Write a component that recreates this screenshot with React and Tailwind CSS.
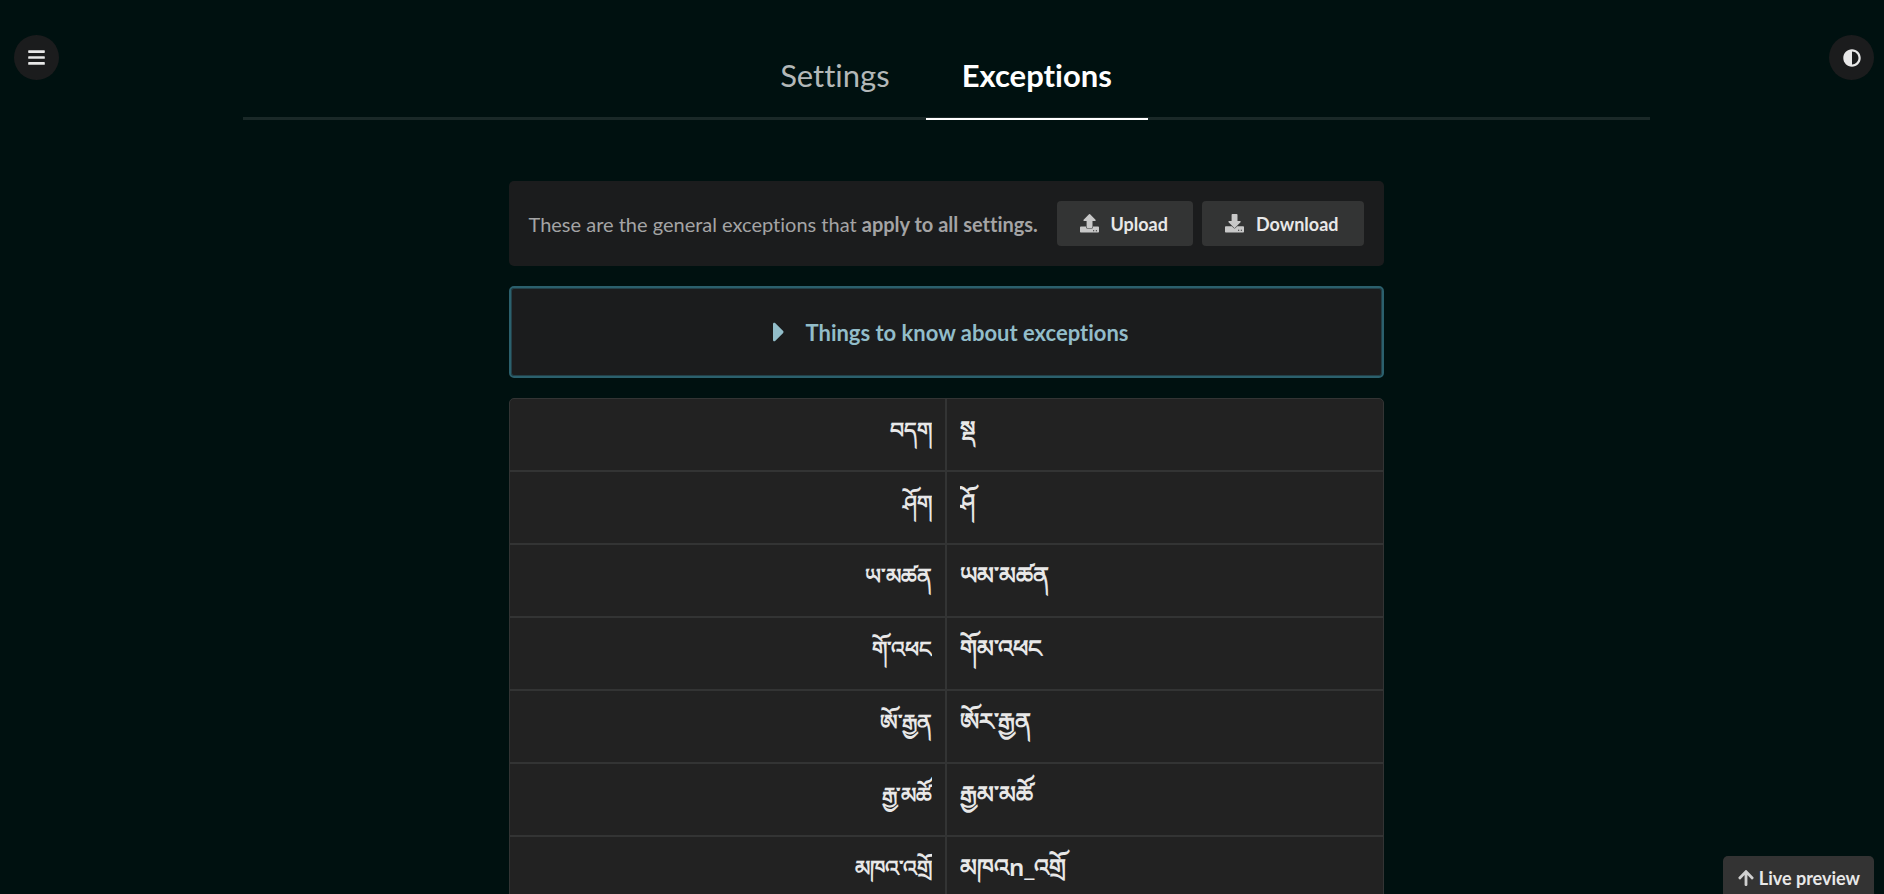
import { FaAdjust, FaArrowUp, FaBars, FaCaretRight } from "react-icons/fa";

const exceptions = [
  ["བདག", "སྡ"],
  ["ཤོག", "ཤོ"],
  ["ཡ་མཚན", "ཡམ་མཚན"],
  ["གོ་འཕང", "གོམ་འཕང"],
  ["ཨོ་རྒྱན", "ཨོར་རྒྱན"],
  ["རྒྱ་མཚོ", "རྒྱམ་མཚོ"],
  ["མཁའ་འགྲོ", "མཁའn_འགྲོ"],
];

function UploadIcon(props) {
  return (
    <svg viewBox="0 0 19 19" fill="currentColor" {...props}>
      <path d="M9 .3a.8.8 0 0 1 1.1 0l5.4 5.4c.5.5.2 1.2-.5 1.2h-2.5v6.3c0 .5-.4.8-.8.8H7.4a.8.8 0 0 1-.8-.8V6.9H4.1c-.7 0-1-.7-.5-1.2z" />
      <path
        fillRule="evenodd"
        d="M.8 12.6h5.3v.6c0 .8.6 1.3 1.3 1.3h4.3c.7 0 1.3-.5 1.3-1.3v-.6h5.2c.5 0 .8.4.8.8v4.4c0 .5-.3.8-.8.8H.8a.8.8 0 0 1-.8-.8v-4.4c0-.4.4-.8.8-.8zM13 16.3h1.2v1H13zM15.8 16.3H17v1h-1.2z"
      />
    </svg>
  );
}

function DownloadIcon(props) {
  return (
    <svg viewBox="0 0 19 19" fill="currentColor" {...props}>
      <path d="M7.4 0h4.3c.4 0 .8.4.8.8V7H15c.7 0 1 .8.5 1.3l-5.4 5.4a.8.8 0 0 1-1.1 0L3.6 8.3C3.1 7.8 3.4 7 4.1 7h2.5V.8c0-.4.3-.8.8-.8z" />
      <path
        fillRule="evenodd"
        d="M.8 12.3h6.1l1.7 1.8c.6.5 1.3.5 1.9 0l1.7-1.8h6c.5 0 .8.4.8.8v4.7c0 .5-.3.8-.8.8H.8a.8.8 0 0 1-.8-.8v-4.7c0-.4.4-.8.8-.8zM13 15.7h1.2v1.1H13zM15.8 15.7H17v1.1h-1.2z"
      />
    </svg>
  );
}

function ActionButton({ icon: Icon, children }) {
  return (
    <button
      type="button"
      className="flex h-[45px] items-center gap-3 rounded-[4px] bg-[#333434] pr-[25px] pl-[23px] text-lg font-bold text-[#e8e8e8]"
    >
      <Icon aria-hidden="true" className="size-[19px] text-[#c8c8c8]" />
      {children}
    </button>
  );
}

function ExceptionRow({ source, replacement }) {
  return (
    <tr className="h-[73px] border-b-2 border-[#333434] first:h-[72px]">
      <td className="w-1/2 border-r-2 border-[#333434] p-0">
        <input
          aria-label={`Exception ${source}`}
          defaultValue={source}
          className="block h-[71px] w-full bg-transparent px-[13px] pt-1 text-right font-['Noto_Sans',sans-serif] text-[22px] font-semibold text-[#e8e8e8] outline-none"
        />
      </td>
      <td className="w-1/2 p-0">
        <input
          aria-label={`Replacement for ${source}`}
          defaultValue={replacement}
          className="block h-[71px] w-full bg-transparent px-[13px] pt-1 font-['Noto_Sans',sans-serif] text-[24px] font-semibold text-[#e8e8e8] outline-none"
        />
      </td>
    </tr>
  );
}

export default function App() {
  return (
    <div className="min-h-screen bg-[#001110] pl-2 font-['Lato','Noto_Sans',sans-serif] [font-variant-ligatures:no-common-ligatures]">
      <button
        type="button"
        aria-label="Open menu"
        className="fixed top-[35px] left-[14px] flex size-[45px] items-center justify-center rounded-full bg-[#1b1c1d] text-[#e8e8e8]"
      >
        <FaBars aria-hidden="true" className="size-[19px]" />
      </button>
      <button
        type="button"
        aria-label="Toggle theme"
        className="fixed top-[35px] right-[10px] flex size-[45px] items-center justify-center rounded-full bg-[#1b1c1d] text-[#e8e8e8]"
      >
        <FaAdjust aria-hidden="true" className="size-[18px]" />
      </button>

      <nav className="mx-auto flex w-3/4 justify-center border-b-[3px] border-[#1a2928] pt-8 text-[31px] leading-[40px]">
        <a href="#settings" className="px-9 pt-[23px] pb-[22px] text-[#b3b8b8]">
          Settings
        </a>
        <a
          href="#exceptions"
          aria-current="page"
          className="-mb-[3px] border-b-2 border-white px-9 pt-[23px] pb-[23px] font-bold text-white"
        >
          Exceptions
        </a>
      </nav>

      <main className="mx-auto flex w-[875px] max-w-full flex-col gap-5 pt-[61px]">
        <section className="flex items-center justify-between rounded-[5px] bg-[#1b1c1d] p-5">
          <p className="text-xl text-[#a4a4a5]">
            These are the general exceptions that <b>apply to all settings.</b>
          </p>
          <div className="flex gap-[9px]">
            <ActionButton icon={UploadIcon}>Upload</ActionButton>
            <ActionButton icon={DownloadIcon}>Download</ActionButton>
          </div>
        </section>

        <button
          type="button"
          aria-expanded="false"
          className="flex h-[92px] items-center justify-center gap-[10px] rounded-[5px] border-2 border-[#2b606d] bg-[#1b1c1d] text-[22px] font-bold text-[#92bdc9] inset-ring inset-ring-[#234048]"
        >
          <FaCaretRight aria-hidden="true" className="size-8" />
          Things to know about exceptions
        </button>

        <div className="overflow-hidden rounded-[5px] border border-[#333434] bg-[#222222]">
          <table className="w-full table-fixed border-collapse">
            <tbody>
              {exceptions.map(([source, replacement]) => (
                <ExceptionRow key={source} source={source} replacement={replacement} />
              ))}
            </tbody>
          </table>
        </div>
      </main>

      <button
        type="button"
        className="fixed right-[10px] -bottom-[6px] flex h-11 items-center gap-1 rounded-t-[5px] bg-[#333333] px-[14px] text-lg font-bold text-[#e8e8e8]"
      >
        <FaArrowUp aria-hidden="true" className="size-[18px] text-[#d0d0d0]" />
        Live preview
      </button>
    </div>
  );
}
